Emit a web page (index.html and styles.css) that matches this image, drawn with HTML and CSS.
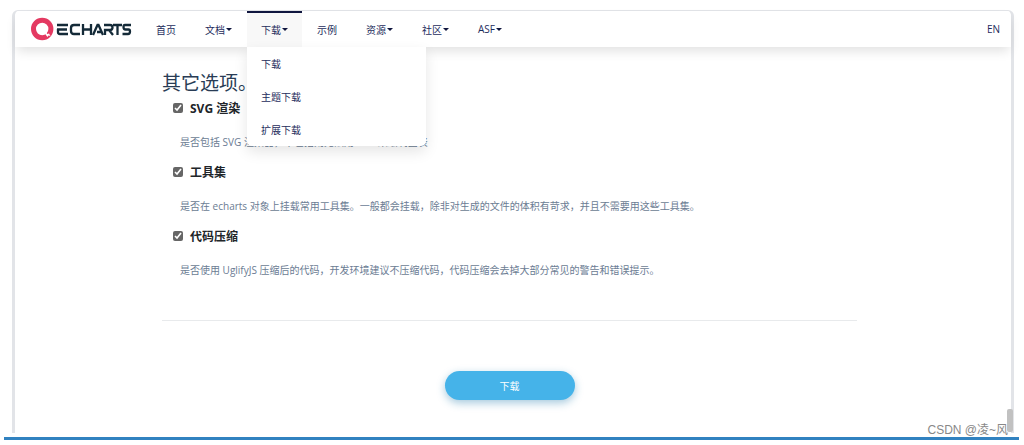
FILE: index.html
```html
<!DOCTYPE html>
<html lang="zh-CN">
<head>
<meta charset="utf-8">
<title>ECharts 下载</title>
<link rel="stylesheet" href="styles.css">
</head>
<body>
<div class="window">
  <header class="navbar">
    <a class="brand" href="#" aria-label="ECharts">
      <svg class="logo" viewBox="0 0 101 24" aria-hidden="true">
        <circle cx="11.200" cy="12" r="8.700" fill="none" stroke="#e43961" stroke-width="5"/>
        <path d="M14 14L15.500 15L16 17L18 16.500L19.500 19L17.500 18.500L16.500 20L14.500 17.500Z" fill="#fff"/>
        <g fill="none" stroke="#142a38" stroke-width="2.300">
          <path d="M26 8H37M26 12.500H36M37 17H29Q27 17 27 15V12"/>
          <path d="M49 8H43Q40 8 40 11V14Q40 17 43 17H49"/>
          <path d="M52 7V18M60 7V18M52 12.500H60"/>
          <path d="M62 18L66.500 8H67.500L72 18M66 15H70"/>
          <path d="M73 8H79Q81.500 8 81.500 10.500Q81.500 13 79 13H74V18M78 13L82 18"/>
          <path d="M82 8H91M86.500 8V18"/>
          <path d="M100 8H94Q92.500 8 92.500 10Q92.500 12.500 94.500 12.500H97.500Q99 12.500 99 14.500Q99 17 97 17H91.500"/>
        </g>
      </svg>
    </a>
    <nav class="menu">
      <a class="item" href="#">首页</a>
      <a class="item" href="#">文档<span class="caret"></span></a>
      <div class="dropdown">
        <a class="item active" href="#">下载<span class="caret"></span></a>
        <div class="panel">
          <a href="#">下载</a>
          <a href="#">主题下载</a>
          <a href="#">扩展下载</a>
        </div>
      </div>
      <a class="item" href="#">示例</a>
      <a class="item" href="#">资源<span class="caret"></span></a>
      <a class="item" href="#">社区<span class="caret"></span></a>
      <a class="item" href="#">ASF<span class="caret"></span></a>
    </nav>
    <a class="lang" href="#">EN</a>
  </header>
  <main class="content">
    <h1>其它选项。</h1>
    <section class="option">
      <label><input type="checkbox" checked>SVG 渲染</label>
      <p>是否包括 SVG 渲染器，不包括则无法用 SVG 来绘制图表</p>
    </section>
    <section class="option">
      <label><input type="checkbox" checked>工具集</label>
      <p>是否在 echarts 对象上挂载常用工具集。一般都会挂载，除非对生成的文件的体积有苛求，并且不需要用这些工具集。</p>
    </section>
    <section class="option">
      <label><input type="checkbox" checked>代码压缩</label>
      <p>是否使用 UglifyJS 压缩后的代码，开发环境建议不压缩代码，代码压缩会去掉大部分常见的警告和错误提示。</p>
    </section>
    <hr>
    <button class="download" type="button">下载</button>
  </main>
  <div class="thumb"></div>
</div>
<div class="bar"></div>
<div class="watermark">CSDN @凌~风</div>
</body>
</html>
```
FILE: styles.css
```css
* { box-sizing: border-box; }
body {
  position: relative;
  margin: 0;
  padding: 10px 5px 5px 4px;
  background: #fff;
  color: #293c55;
  font-family: "Open Sans", "Noto Sans CJK SC", sans-serif;
  font-size: 10px;
}
a { color: #1d2c5c; text-decoration: none; }
.window {
  position: relative;
  margin: 0 5px 4px 8px;
  border: 3px solid #e2e4e8;
  border-top-width: 1px;
  border-bottom: 0;
  border-radius: 6px 6px 0 0;
}
.navbar {
  position: relative;
  z-index: 1;
  display: flex;
  height: 36px;
  padding: 0 11px 0 16px;
  border-radius: 5px 5px 0 0;
  background: #fff;
  box-shadow: 0 6px 12px -2px rgba(0, 0, 0, 0.12);
}
.brand { display: flex; align-items: center; width: 111px; }
.logo { width: 101px; height: 24px; overflow: visible; }
.menu { display: flex; flex: 1; gap: 1px; }
.item {
  display: flex;
  align-items: center;
  height: 36px;
  padding: 0 14px 2px;
  border-top: 2px solid transparent;
}
.active { border-top-color: #10163f; background: #f8f8f8; }
.caret {
  margin-left: 1px;
  border: 3px solid transparent;
  border-top-color: #10163f;
  border-bottom: 0;
}
.lang { display: flex; align-items: center; }
.dropdown { position: relative; }
.panel {
  position: absolute;
  top: 36px;
  left: 0;
  width: 179px;
  border-radius: 0 0 5px 5px;
  background: #fff;
  box-shadow: 0 6px 14px rgba(0, 0, 0, 0.1);
}
.panel a { display: block; padding: 1px 14px 0; line-height: 32px; }
.content { display: flex; flex-direction: column; padding: 22px 154px 33px 147px; }
h1 { margin: 0; font-size: 19px; font-weight: 400; line-height: 28px; }
.option { padding: 0 0 0 11px; }
.option label {
  display: flex;
  align-items: center;
  gap: 7px;
  height: 22px;
  color: #212529;
  font-size: 12px;
  font-weight: 700;
}
.option input { width: 10px; height: 10px; margin: 0; accent-color: #666; }
.option p { margin: 0; padding: 13px 0 9px 7px; color: #6b7c93; line-height: 20px; }
hr { width: 100%; height: 1px; margin: 31px 0 50px; border: 0; background: #e8eaec; }
.download {
  align-self: center;
  width: 130px;
  height: 29px;
  border: 0;
  border-radius: 15px;
  background: #45b3e9;
  box-shadow: 0 3px 8px rgba(30, 120, 170, 0.4);
  color: #fff;
  font: inherit;
}
.thumb {
  position: absolute;
  right: -2px;
  bottom: 1px;
  width: 6px;
  height: 23px;
  border-radius: 2px;
  background: #c1c1c1;
}
.bar { height: 3px; background: #3182c0; }
.watermark {
  position: absolute;
  right: 16px;
  bottom: 6px;
  color: #888;
  font: 12px/18px "Liberation Sans", "Noto Sans CJK SC", sans-serif;
}
```
